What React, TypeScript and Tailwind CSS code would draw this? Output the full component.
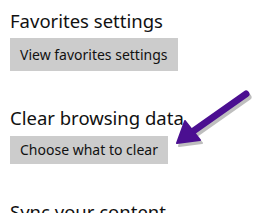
const font = { fontFamily: '"Noto Sans", "Open Sans", sans-serif' };

function Arrow() {
  return (
    <svg className="absolute left-0 top-0" width="278" height="213" viewBox="0 0 278 213">
      <g transform="translate(2 3)" fill="#8a8a8a" stroke="#8a8a8a" opacity="0.55">
        <line x1="246" y1="94" x2="192" y2="132" strokeWidth="7" strokeLinecap="round" />
        <polygon points="177,143 185,121 200,140" strokeWidth="2" strokeLinejoin="round" />
      </g>
      <g fill="#4b0f91" stroke="#4b0f91">
        <line x1="246" y1="94" x2="192" y2="132" strokeWidth="7" strokeLinecap="round" />
        <polygon points="177,143 185,121 200,140" strokeWidth="2" strokeLinejoin="round" />
      </g>
    </svg>
  );
}

export default function App() {
  return (
    <div className="relative h-[213px] w-[278px] overflow-hidden bg-white text-[#111]" style={font}>
      <div className="flex flex-col items-start pl-[10px] pt-[7px]">
        <h2 className="text-[18.5px] leading-[28px]">Favorites settings</h2>
        <button type="button" className="mt-[3px] h-[33px] bg-[#cccccc] px-[10px] text-[14px] leading-none">
          View favorites settings
        </button>

        <h2 className="mt-[33px] text-[18.5px] leading-[28px]">Clear browsing data</h2>
        <button type="button" className="mt-[4px] h-[28px] bg-[#cccccc] px-[10px] text-[14px] leading-none">
          Choose what to clear
        </button>

        <h2 className="mt-[34px] text-[18.5px] leading-[28px]">Sync your content</h2>
      </div>
      <Arrow />
    </div>
  );
}
